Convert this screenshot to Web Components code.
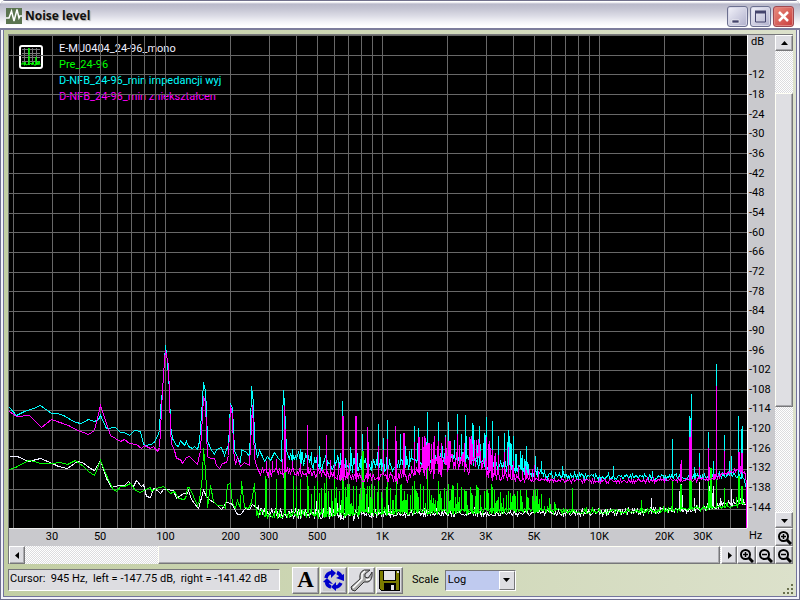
<!DOCTYPE html>
<html lang="en">
<head>
<meta charset="utf-8">
<title>Noise level</title>
<style>
html,body{height:100%;margin:0}
body{font:11px/14px Roboto,"Liberation Sans",sans-serif;color:#000;background:#fff;overflow:hidden}
</style>
</head>
<body>
<noise-window></noise-window>
<script>
const define=(name,html,ready)=>customElements.define(name,class extends HTMLElement{
  constructor(){super();this.attachShadow({mode:'open'}).innerHTML=html;}
  connectedCallback(){if(ready)ready(this,this.shadowRoot);}
});

define('title-bar',`<style>
:host{display:flex;align-items:center;height:30px;box-sizing:border-box;padding:3px 6px 0 6px;gap:3px;border-top:1px solid #71718c;border-bottom:2px solid #7d7d9c;
background:linear-gradient(#fff 0,#fff 1px,#b9b9ca 3px,#c5c5d3 8px,#dcdce6 15px,#f4f4f8 21px,#fff 25px)}
svg{display:block}
h1{flex:1;margin:0;font:bold 12px/18px "Open Sans","Noto Sans",sans-serif;color:#111;text-shadow:1px 1px 1px #aaa}
div{display:flex;gap:2px}
button{width:21px;height:21px;padding:0;border:1px solid #6c7090;border-radius:3px;background:linear-gradient(135deg,#f2f2fa,#b0b0cc);box-shadow:inset 0 0 0 1px #d8d8e8}
.close{background:linear-gradient(135deg,#e88a7c,#c93c3c);border-color:#a04850;box-shadow:inset 0 0 0 1px #df8580}
</style>
<svg width="16" height="16" viewBox="0 0 16 16"><rect width="16" height="16" fill="#5b7550"/><path d="M0 10H3L5.500 3L8 13L11 1.500L13 10L14 8H16" fill="none" stroke="#fff" stroke-width="1.500"/></svg>
<h1>Noise level</h1>
<div><button aria-label="Minimize"><svg width="19" height="19"><path d="M4 13H11V16H4Z" fill="#44446c" stroke="#fff" stroke-width=".6"/></svg></button>
<button aria-label="Maximize"><svg width="19" height="19"><path d="M4.500 5H14.500V15H4.500Z" fill="none" stroke="#44446c"/><path d="M4 5H15" stroke="#44446c" stroke-width="3"/></svg></button>
<button class="close" aria-label="Close"><svg width="19" height="19"><path d="M5 5L14 14M14 5L5 14" stroke="#fff" stroke-width="2.500"/></svg></button></div>`);

define('bevel-button',`<style>
:host{display:block;min-width:0}
button{display:grid;place-items:center;width:100%;height:100%;padding:0;box-sizing:border-box;background:#dddde2;border:1px solid;border-color:#fff #77777a #77777a #fff;box-shadow:inset -1px -1px #a9a9ad}
</style><button><slot></slot></button>`,(el,root)=>root.querySelector('button').setAttribute('aria-label',el.getAttribute('label')));

define('zoom-icon',`<style>:host{display:block}svg{display:block}</style>
<svg width="15" height="15"><circle cx="6.500" cy="6.500" r="4.500" fill="none" stroke="#000" stroke-width="2"/><path d="M10 10L14 14" stroke="#000" stroke-width="3"/><path d="M4 6.500H9" stroke="#000" stroke-width="1.500"/><path class="v" d="M6.500 4V9" stroke="#000" stroke-width="1.500"/></svg>`,
(el,root)=>{if(el.hasAttribute('out'))root.querySelector('.v').remove();});

define('scroll-bar',`<style>
:host{display:flex;min-width:0;min-height:0}
:host([vertical]){flex-direction:column}
bevel-button{flex:0 0 16px}
.track{flex:1;display:flex;min-width:0;min-height:0;background:repeating-conic-gradient(#fff 0 25%,#dcdcdf 0 50%) 0 0/2px 2px}
:host([vertical]) .track{flex-direction:column}
.thumb{box-sizing:border-box;background:#dfdfe3;border:1px solid;border-color:#fffff4 #77777a #77777a #fffff4;box-shadow:inset -1px -1px #a9a9ad}
svg{display:block}
</style><bevel-button label="Back"><svg width="9" height="9"><path class="a" fill="#000"/></svg></bevel-button>
<div class="track"><i></i><div class="thumb"></div><b></b></div>
<bevel-button label="Forward"><svg width="9" height="9"><path class="z" fill="#000"/></svg></bevel-button>`,
(el,root)=>{
  const v=el.hasAttribute('vertical'),n=el.getAttribute('parts').split(' ');
  [...root.querySelector('.track').children].forEach((c,i)=>c.style.flex=n[i]+' 0 0px');
  root.querySelector('.a').setAttribute('d',v?'M1 6H8L4.500 2Z':'M6 1V8L2 4.500Z');
  root.querySelector('.z').setAttribute('d',v?'M1 3H8L4.500 7Z':'M3 1V8L7 4.500Z');
});

define('db-axis',`<style>
:host{display:flex;flex-direction:column;background:#c9c9cd;border-left:1px solid #fff;padding:0 0 11px 1px}
span{flex:1 1 0;display:flex;align-items:center;min-height:0;line-height:1}
.unit{flex:0 0 30px;align-items:flex-start;box-sizing:border-box;padding:0 0 0 2px;line-height:14px}
</style><span class="unit">dB</span>`,(el,root)=>{
  for(let d=12;d<=144;d+=6){const s=document.createElement('span');s.textContent='-'+d;root.append(s);}
});

define('hz-axis',`<style>
:host{display:flex;background:#c9c9cd;border-top:1px solid #eee;box-sizing:border-box;line-height:15px}
span{width:0;display:flex;justify-content:center}
i{flex-basis:0}
</style>`,(el,root)=>{
  const f=[30,50,100,200,300,500,1000,2000,3000,5000,10000,20000,30000];
  let last=19;
  const gap=to=>{const i=document.createElement('i');i.style.flexGrow=Math.round(1000*Math.log10(to/last));root.append(i);last=to;};
  f.forEach(h=>{gap(h);const s=document.createElement('span');s.textContent=h<1000?h:h/1000+'K';root.append(s);});
  gap(48000);
});

define('trace-legend',`<style>
:host{display:flex;gap:16px;padding:5px 0 0 10px}
svg{display:block;margin-top:4px}
ul{list-style:none;margin:0;padding:0;line-height:16px;white-space:nowrap}
</style><svg width="24" height="24" viewBox="0 0 24 24"><rect x="1" y="1" width="22" height="22" rx="2" fill="#000" stroke="#fff" stroke-width="2"/><path d="M3 4.500H21M3 8.500H21M3 12.500H21M3 16.500H21M5.500 3V20M9.500 3V20M13.500 3V20M17.500 3V20" stroke="#777" shape-rendering="crispEdges"/><path d="M3 20V18H5V20H6V17L7 20L9 19L10 20V3V20L12 18L13 20L14 17L15 20H17V12V20L18 17L19 20L20 16L21 20" fill="none" stroke="#0f0"/></svg>
<ul><li style="color:#f0f0ff">E-MU0404_24-96_mono</li><li style="color:#0f0">Pre_24-96</li><li style="color:#0ff">D-NFB_24-96_min impedancji wyj</li><li style="color:#f0f">D-NFB_24-96_min zniekształcen</li></ul>`);

define('spectrum-plot',`<style>
:host{display:grid;background:#000;min-width:0;min-height:0;overflow:hidden;box-sizing:border-box;border-top:1px solid #666}
:host>*,svg,trace-legend{grid-area:1/1;min-width:0;min-height:0}
svg{width:100%;height:100%;display:block}
path{fill:none;stroke-width:1;vector-effect:non-scaling-stroke}
</style><trace-legend></trace-legend><svg viewBox="9 36 738 492" preserveAspectRatio="none" shape-rendering="crispEdges" role="img" aria-label="Noise spectrum"></svg>`,
(el,root)=>{
  const svg=root.querySelector('svg');
  const draw=(d,c)=>{const p=document.createElementNS('http://www.w3.org/2000/svg','path');p.setAttribute('d',d);p.style.stroke=c;svg.append(p);};
  let grid='';
  for(let e=10;e<=10000;e*=10)for(let k=1;k<10;k++){const f=e*k;if(f>=20&&f<48000)grid+='M'+(Math.round(165+217*Math.log10(f/100))+.5)+' 35V529';}
  for(let k=1;k<25;k++)grid+='M9 '+(Math.round(35+19.73*k)+.5)+'H748';
  draw(grid,'#686868');

  let seed=7;
  const rnd=()=>(seed=(seed*16807)%2147483647)/2147483647;
  const at=(t,x)=>{let i=1;while(i<t.length-1&&t[i][0]<x)i++;const[a,b]=t[i-1],[c,d]=t[i];return b+(d-b)*Math.max(0,Math.min(1,(x-a)/(c-a)));};
  const pts=s=>s.trim().split(/\s+/).map(p=>p.split(',').map(Number));
  // start: measured points; base: noise floor "x,y"; amp: jitter "x,a"; dense: "x0,x1,top,chance"; peaks "x,top[,width]"
  const trace=(color,start,base,amp,dense,peaks,end)=>{
    const s=pts(start),b=pts(base),a=pts(amp),ds=pts(dense),pk=new Map();
    pts(peaks).forEach(([x,y,w=1])=>{for(let i=0;i<w;i++)pk.set(x+i,y);});
    let d='M'+s.map(p=>p.map(n=>n+.5).join(' ')).join('L');
    for(let x=s[s.length-1][0]+1;x<746;x++){
      const y=Math.round(at(b,x)+(rnd()-.5)*2*at(a,x));
      d+='L'+(x+.5)+' '+(y+.5);
      let top=pk.get(x);
      if(top===undefined)for(const[x0,x1,t,c]of ds)if(x>=x0&&x<x1&&rnd()<c)top=Math.round(y-(y-t)*(.3+.7*rnd()));
      if(top!==undefined)d+='V'+(top+.5)+'V'+(y+.5);
    }
    draw(d+end,color);
  };
  trace('#eeeeff',
   '9,456 17,456 28,461 40,458 52,463 58,466 67,468 77,461 82,462 90,468 94,470 100,460 106,478 111,487 118,485 124,485 128,481 133,486 136,480 141,486 143,484 146,496 150,497 153,488 157,490 160,493 163,489 166,489 173,490 176,498 183,493 187,493 188,490 191,499 194,503 198,508 203,490 206,496 210,500 214,502 221,509 226,502 231,503 237,514 240,514 245,508 249,509 252,504 257,508',
   '258,510 270,512 320,514 380,513 500,513 600,512 650,511 700,508 747,501','258,5 340,6 370,4 420,3 540,3 650,3 747,3',
   '290,345,500,.15 345,500,505,.12 600,660,506,.05',
   '336,497 363,502 388,504 400,505 651,497 679,490 681,483 682,494 694,497 699,481 708,485,2 711,492,2 713,485 720,497 724,490 731,488','');
  trace('#00ffff',
   '9,407 16,415 24,411 33,408 40,405 51,413 57,413 63,415 75,422 81,423 88,419 94,421 98,419 100,415 106,428 115,427 120,432 124,432 129,435 134,430 140,431 143,444 146,445 153,443 157,436 159,430 160,408 162,390 164,360 165,345 167,362 169,390 170,425 172,438 176,445 178,446 180,440 184,445 186,441 188,446 192,448 194,446 197,449 199,441 200,428 202,400 203,382 205,390 206,410 207,440 210,448 214,454 216,449 221,447 224,455 228,444 229,425 230,403 232,408 234,450 237,457 240,462 241,449 246,452 249,456 250,430 251,386 253,402 254,440 257,457 259,450 262,456 264,461 267,456 270,460 274,452 278,458 281,461 282,420 283,390 284,404 286,450 288,456',
   '289,458 310,462 350,465 390,465 430,460 460,458 500,465 530,472 550,475 600,476 650,477 710,476 735,474 742,477 747,487','289,8 330,8 400,6 500,7 535,4 560,3 747,3',
   '300,400,450,.15 400,440,440,.3 440,515,432,.3 515,529,452,.75 529,545,465,.2 590,740,471,.05',
   '292,448 300,448 307,443 319,445 326,446 334,448 342,400 343,415 350,446 355,444 362,433 368,450 378,423 383,437 387,419 395,426 400,433 411,448 414,425 418,427 427,411 438,421 448,421 457,413 461,433 465,414 472,422 473,424 479,425 486,416 492,420 498,435 504,432 508,429 513,435 520,450 526,445 535,455 541,460 562,465 613,465 652,470 672,438 689,415 690,417 691,393 694,466 699,452 708,431 713,460 716,363 719,470 724,434 729,460 731,455 738,415 741,428 742,425','L746.5 487.5');
  trace('#00ff00',
   '9,469 15,467 28,460 34,461 40,463 52,463 60,462 67,464 75,460 83,466 88,471 94,475 100,460 106,475 112,488 116,491 120,486 124,486 130,483 135,490 140,492 145,489 150,487 151,491 156,488 163,486 165,488 170,493 174,491 178,498 184,499 186,495 187,487 189,487 193,496 197,505 199,500 202,475 203,448 205,470 207,507 210,485 213,501 217,505 222,505 225,508 227,484 230,483 232,503 235,508 237,500 240,508 241,481 244,507 248,508 251,502 254,483 256,515',
   '257,513 320,513 400,511 540,510 600,511 650,510 700,508 730,506 747,502','257,5 330,4 540,3 747,2',
   '310,345,485,.2 345,410,482,.55 410,500,483,.6 500,540,488,.5 540,600,502,.1 725,742,490,.12',
   '265,475 266,478 276,478 284,455,2 293,475 296,485 300,478 307,475 308,485 317,480 319,492 324,482 326,456 334,475 342,465,2 349,483 353,485 356,485 362,450,2 378,455 387,468 396,455 401,483 404,490 414,480 427,455 429,489 438,480 448,483 451,488 457,482 466,490 472,494 478,487 486,490 492,486 513,494 520,489 526,489 535,488 541,493 549,497 554,501 572,487 641,499 672,479 680,483 681,484 689,478,3 708,476 709,490 710,467,2 724,487 716,478 738,475,2 741,485,2','');
  trace('#ff00ff',
   '9,411 16,416 29,415 41,427 51,419 68,425 75,429 88,434 94,430 100,405 106,423 110,435 120,441 124,439 129,443 136,444 141,448 144,445 150,448 153,446 157,451 159,447 160,430 162,390 164,360 165,350 168,365 169,395 170,430 171,443 174,450 176,458 180,459 182,463 186,457 189,456 197,464 200,450 202,415 203,396 205,402 206,430 207,456 210,458 214,458 216,465 219,468 222,463 226,462 228,455 230,405 232,415 233,450 235,464 237,457 240,466 244,462 249,465 251,425 252,405 253,430 254,458 257,468 260,474',
   '261,472 330,473 350,477 400,477 420,470 440,464 480,462 495,475 530,479 600,481 650,480 710,479 733,470 740,471 744,473 747,480','261,5 330,5 380,4 430,12 480,12 500,5 540,2 747,2',
   '270,360,457,.1 415,500,435,.35 500,535,462,.3',
   '266,460 276,458 284,405 285,428 292,460 300,462 307,424 308,466 317,454 326,434 334,463 342,415,2 355,415,2 367,426 368,441 378,445 383,449 387,438 395,425 396,440 403,432,2 411,465 414,441 418,436,2 424,435 427,442,3 438,440 445,436 448,440,3 457,433 464,442 472,443 479,442 486,436 492,449 498,454 504,451 508,446 513,460 518,465 538,470 680,463 681,459 689,436,2 691,419 699,466 708,447 709,466 713,473,4 716,385 724,450 738,451,2 740,465 741,452,2','L745.5 474.5L746.5 485.500V529');
});

define('tool-button',`<style>:host{display:block;width:27px;height:27px}bevel-button{height:100%}</style><bevel-button><slot></slot></bevel-button>`,
(el,root)=>root.querySelector('bevel-button').shadowRoot.querySelector('button').setAttribute('aria-label',el.getAttribute('label')));

define('status-bar',`<style>
:host{display:flex;align-items:center;padding:3px 0 0;height:29px;box-sizing:border-box}
output{flex:0 1 272px;box-sizing:border-box;height:22px;padding:2px 1px;background:#dddde1;border:1px solid;border-color:#77777a #fff #fff #77777a;white-space:pre;line-height:14px}
.tools{display:flex;gap:1px;margin:0 9px 0 12px}
svg{display:block}
.letter{font:bold 23px/24px "Liberation Serif",serif}
label{margin-right:6px}
.pick{display:grid;width:71px;height:21px;box-sizing:border-box;border:1px solid;border-color:#77777a #fff #fff #77777a;background:#bfcaef}
select{grid-area:1/1;appearance:none;width:100%;margin:0;padding:0 2px;border:0;background:none;font:inherit;color:#000}
.pick i{grid-area:1/1;justify-self:end;width:16px;box-sizing:border-box;pointer-events:none;display:grid;place-items:center;background:#dddde2;border:1px solid;border-color:#fff #77777a #77777a #fff}
</style><output>Cursor:  945 Hz,  left = -147.75 dB,  right = -141.42 dB</output>
<div class="tools">
<tool-button label="Font"><span class="letter">A</span></tool-button>
<tool-button label="Refresh"><svg width="22" height="22" viewBox="0 0 22 22"><rect width="22" height="22" fill="#ccccd0"/><g fill="none" stroke="#00c" stroke-width="3.500"><path d="M3 9Q4 4 9 3.500"/><path d="M14 3.500Q18 5 18 9"/><path d="M18 14Q16 18 12 18"/><path d="M8 18Q4 17 3.500 13"/></g><path d="M8 0L13 4L8 9ZM13 9L21 5V12ZM13 13V22L8 18ZM0 13L4 9L10 15Z" fill="#00c"/></svg></tool-button>
<tool-button label="Settings"><svg width="23" height="23" viewBox="0 0 23 23"><path d="M2 21L1 18L10 10Q9 3 14 1H20L15 5V8L18 9L21 5L22 3Q23 11 18 13L14 13L5 22Z" fill="#aaa" stroke="#333"/><path d="M3 19L12 10V5L15 2M16 11L20 10" fill="none" stroke="#fff" stroke-width="1.500"/></svg></tool-button>
<tool-button label="Save"><svg width="21" height="21" viewBox="0 0 21 21" shape-rendering="crispEdges"><path d="M0 0H21V21H2L0 19Z"/><path d="M1 1H20V20H2L1 19Z" fill="#7c7c00"/><path d="M4 0H17V11H4ZM5 13H17V21H5Z"/><path d="M5 1H16V10H5ZM12 15H15V20H12Z" fill="#e2e2e6"/><path d="M18 1H20V3H18Z" fill="#ddd"/></svg></tool-button>
</div>
<label for="scale">Scale</label>
<div class="pick"><select id="scale"><option>Log</option><option>Linear</option></select><i><svg width="7" height="4"><path d="M0 0H7L3.500 4Z"/></svg></i></div>`);

define('noise-window',`<style>
:host{display:flex;flex-direction:column;height:100vh;box-sizing:border-box;background:#71718c;border-radius:6px 6px 0 0;overflow:hidden}
.frame{flex:1;min-height:0;display:flex;flex-direction:column;border:solid #6e6e8e;border-width:0 1px 1px}
.inner{flex:1;min-height:0;display:flex;flex-direction:column;border:solid #f2f2fa;border-width:0 2px 2px}
.body{position:relative;flex:1;min-height:0;display:flex;flex-direction:column;border:solid #73739c;border-width:0 1px 1px;padding:4px 3px 3px 4px;background:linear-gradient(90deg,#c2cea4,#dce1cb)}
.view{flex:1;min-height:0;display:grid;grid-template-columns:minmax(0,1fr) 28px 18px;grid-template-rows:minmax(0,1fr) 18px 18px;border:solid #77777a;border-width:1px 0 0 1px}
.unit{background:#c9c9cd;line-height:16px;padding-left:2px}
.row{grid-column:1/-1;display:flex}
.row scroll-bar{flex:1}
.row bevel-button{flex:0 0 19px}
.row bevel-button:last-child{flex-basis:18px}
.body>svg{position:absolute;right:1px;bottom:1px}
</style><title-bar></title-bar><div class="frame"><div class="inner"><div class="body">
<div class="view"><spectrum-plot></spectrum-plot><db-axis></db-axis><scroll-bar vertical parts="42 314 106"></scroll-bar>
<hz-axis></hz-axis><span class="unit">Hz</span><bevel-button label="Zoom in vertically"><zoom-icon></zoom-icon></bevel-button>
<div class="row"><scroll-bar parts="133 562 1"></scroll-bar><bevel-button label="Zoom in"><zoom-icon></zoom-icon></bevel-button><bevel-button label="Zoom out"><zoom-icon out></zoom-icon></bevel-button><bevel-button label="Zoom out vertically"><zoom-icon out></zoom-icon></bevel-button></div></div>
<status-bar></status-bar>
<svg width="12" height="12" shape-rendering="crispEdges"><path d="M8 1h2v2h-2zM8 5h2v2h-2zM4 5h2v2h-2zM8 9h2v2h-2zM4 9h2v2h-2zM0 9h2v2h-2z" fill="#6a704e"/></svg>
</div></div></div>`);
</script>
</body>
</html>
